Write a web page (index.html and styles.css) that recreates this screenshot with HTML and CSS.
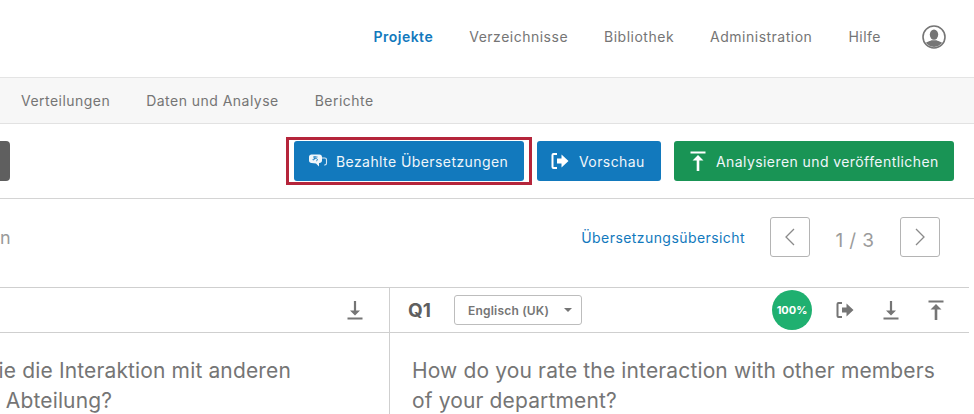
FILE: index.html
```html
<!DOCTYPE html>
<html lang="de">
<head>
<meta charset="utf-8">
<title>Übersetzungen</title>
<link rel="stylesheet" href="styles.css">
</head>
<body>
<header class="topnav">
  <a class="topnav-link is-active">Projekte</a>
  <a class="topnav-link">Verzeichnisse</a>
  <a class="topnav-link">Bibliothek</a>
  <a class="topnav-link">Administration</a>
  <a class="topnav-link">Hilfe</a>
  <svg class="avatar" viewBox="0 0 24 24" width="24" height="24">
    <defs><clipPath id="avatar-clip"><circle cx="12" cy="12" r="10"/></clipPath></defs>
    <g clip-path="url(#avatar-clip)" fill="#757575">
      <ellipse cx="12" cy="9.6" rx="4.2" ry="5.2"/>
      <path d="M2 24v-4.500c1-2.600 5.500-3 7.500-4.300h5c2 1.300 6.500 1.700 7.500 4.300V24z"/>
    </g>
    <circle cx="12" cy="12" r="11" fill="none" stroke="#757575" stroke-width="1.600"/>
  </svg>
</header>
<nav class="subnav">
  <a class="subnav-link">Verteilungen</a>
  <a class="subnav-link">Daten und Analyse</a>
  <a class="subnav-link">Berichte</a>
</nav>
<section class="toolbar">
  <span class="dark-stub"></span>
  <div class="toolbar-actions">
    <div class="highlight">
      <button class="btn btn-blue btn-wide">
        <svg class="btn-icon" viewBox="0 0 20 16" width="20" height="16">
          <path d="M13.500 5h3.300c1 0 1.700.7 1.700 1.700v3.600c0 1-.7 1.700-1.700 1.700h-.6" fill="none" stroke="#d9e8f4" stroke-width="1.100"/>
          <path d="M3.500 1.500h8c1.500 0 2.500 1 2.500 2.500v3.500c0 1.500-1 2.500-2.500 2.500h-.5v3.500L8 10.500 3.500 10c-1.500 0-2.500-1-2.500-2.500V4c0-1.500 1-2.500 2.500-2.500z" fill="#f0f6fa"/>
          <path d="M5 4h4.500M7 3c0 2-.7 3.500-1.500 4s-1-.6.500-1.200 3.500-.2 3.500.8-.8 1.200-1.300 1.200" fill="none" stroke="#1279bd" stroke-width=".9"/>
        </svg>
        <span>Bezahlte Übersetzungen</span>
      </button>
    </div>
    <button class="btn btn-blue btn-preview">
      <svg class="btn-icon" viewBox="0 0 18 18" width="18" height="18">
        <path d="M6 2H2.500c-.6 0-1 .4-1 1v12c0 .6.4 1 1 1H6" fill="none" stroke="#fff" stroke-width="2"/>
        <path d="M6 6.500h4.500V2.500L17.500 9l-7 6.500v-4H6z" fill="#fff"/>
      </svg>
      <span>Vorschau</span>
    </button>
    <button class="btn btn-green">
      <svg class="btn-icon" viewBox="0 0 16 20" width="16" height="20">
        <path d="M.500.500h15v2H.500zM8 4l5.500 5.500H9.300V20H6.700V9.500H2.500z" fill="#fff"/>
      </svg>
      <span>Analysieren und veröffentlichen</span>
    </button>
  </div>
</section>
<section class="pager-row">
  <span class="cut-title">n</span>
  <div class="pager">
    <a class="overview-link">Übersetzungsübersicht</a>
    <button class="page-btn">
      <svg viewBox="0 0 12 20" width="12" height="20"><path d="M10 2 2 10l8 8" fill="none" stroke="#8a8a8a" stroke-width="1.300"/></svg>
    </button>
    <span class="page-count">1 / 3</span>
    <button class="page-btn">
      <svg viewBox="0 0 12 20" width="12" height="20"><path d="m2 2 8 8-8 8" fill="none" stroke="#8a8a8a" stroke-width="1.300"/></svg>
    </button>
  </div>
</section>
<section class="columns">
  <div class="col col-left">
    <div class="col-head col-head-left">
      <svg class="tool" viewBox="0 0 16 20" width="16" height="20"><path d="M.5 17.500h15v2H.5zM6.900 1h2.200v9.500H13L8 15.500 3 10.500h3.900z" fill="#757575"/></svg>
    </div>
    <p class="col-text col-text-left"><span class="line">Wie bewerten Sie die Interaktion mit anderen</span><span class="line line-second">Mitgliedern Ihrer Abteilung?</span></p>
  </div>
  <div class="col col-right">
    <div class="col-head">
      <strong class="q-label">Q1</strong>
      <div class="lang-select"><span>Englisch (UK)</span><i class="caret"></i></div>
      <div class="tools">
        <span class="progress">100%</span>
        <svg class="tool" viewBox="0 0 18 18" width="18" height="18"><path d="M6 2H2.500c-.6 0-1 .4-1 1v12c0 .6.4 1 1 1H6" fill="none" stroke="#757575" stroke-width="2"/><path d="M6 6.500h4.500V2.500L17.500 9l-7 6.500v-4H6z" fill="#757575"/></svg>
        <svg class="tool" viewBox="0 0 16 20" width="16" height="20"><path d="M.5 17.500h15v2H.5zM6.900 1h2.200v9.500H13L8 15.500 3 10.500h3.900z" fill="#757575"/></svg>
        <svg class="tool" viewBox="0 0 16 20" width="16" height="20"><path d="M.5.500h15v2H.5zM8 4l5.500 5.500H9.300V20H6.700V9.500H2.500z" fill="#757575"/></svg>
      </div>
    </div>
    <p class="col-text">How do you rate the interaction with other members<br>of your department?</p>
  </div>
</section>
</body>
</html>
```
FILE: styles.css
```css
* { box-sizing: border-box; }
html, body { margin: 0; height: 414px; overflow: hidden; background: #fff; }
body { width: 974px; font-family: Inter, Roboto, sans-serif; color: #757575; }
button { font: inherit; letter-spacing: inherit; border: 0; padding: 0; cursor: pointer; }
a { cursor: pointer; }

.topnav { height: 78px; border-bottom: 1px solid #e4e4e4; display: flex; align-items: center; justify-content: flex-end; padding: 0 28px 4px 0; }
.topnav-link { font-size: 14px; letter-spacing: .5px; color: #757575; margin-right: 36px; }
.topnav-link:nth-child(5) { margin-right: 41px; }
.topnav-link.is-active { color: #1279bd; font-weight: 600; }
.avatar { display: block; }

.subnav { height: 46px; background: #f7f7f7; border-bottom: 1px solid #e2e2e2; display: flex; align-items: center; gap: 36px; padding: 0 0 1px 21px; }
.subnav-link { font-size: 14px; letter-spacing: .47px; color: #757575; }

.toolbar { height: 75px; border-bottom: 1px solid #d4d4d4; display: flex; align-items: center; justify-content: space-between; padding: 0 20px 0 0; }
.dark-stub { width: 10px; height: 40px; background: #5f5f5f; border-radius: 0 4px 4px 0; }
.toolbar-actions { display: flex; align-items: center; gap: 5px; }
.highlight { border: 3px solid #b5253b; padding: 1px 5px; height: 48px; display: flex; }
.btn { height: 40px; border-radius: 3px; color: #f0f6fa; font-size: 14px; letter-spacing: .42px; display: flex; align-items: center; }
.btn-blue { background: #1279bd; }
.btn-green { background: #199455; margin-left: 8px; }
.btn-wide { width: 230px; padding-left: 14px; gap: 8px; }
.btn-preview { width: 124px; padding-left: 14px; gap: 10px; }
.btn-green { width: 280px; padding-left: 16px; gap: 10px; }
.btn-icon { display: block; flex: none; }

.pager-row { height: 88px; display: flex; align-items: center; justify-content: space-between; padding: 0 34px 12px 0; }
.cut-title { font-size: 18px; color: #9a9a9a; }
.pager { display: flex; align-items: center; }
.overview-link { font-size: 14px; letter-spacing: .43px; color: #1279bd; margin-right: 25px; }
.page-btn { width: 40px; height: 40px; background: #fff; border: 1px solid #b4b4b4; border-radius: 3px; display: flex; align-items: center; justify-content: center; }
.page-count { width: 90px; text-align: center; font-size: 19px; letter-spacing: .4px; color: #9b9b9b; padding-top: 7px; }

.columns { display: flex; height: 128px; width: 969px; border-top: 1px solid #cfcfcf; }
.col { overflow: hidden; }
.col-left { width: 390px; flex: none; border-right: 1px solid #cfcfcf; }
.col-right { flex: 1; }
.col-head { height: 45px; border-bottom: 1px solid #cfcfcf; display: flex; align-items: center; }
.col-head-left { justify-content: flex-end; padding-right: 26px; }
.col-right .col-head { padding: 0 25px 0 18px; }
.q-label { font-size: 19px; font-weight: 700; color: #5f5f5f; width: 46px; }
.lang-select { width: 128px; height: 30px; border: 1px solid #bdbdbd; border-radius: 3px; display: flex; align-items: center; justify-content: space-between; padding: 0 9px 0 13px; font-size: 12px; letter-spacing: .2px; font-weight: 600; color: #757575; }
.caret { width: 0; height: 0; border: 4px solid transparent; border-top: 4px solid #757575; border-bottom: 0; }
.tools { margin-left: auto; display: flex; align-items: center; }
.progress { width: 40px; height: 40px; border-radius: 50%; background: #1fb070; color: #fff; font-size: 11px; font-weight: 700; display: flex; align-items: center; justify-content: center; margin-right: 24px; }
.tools .tool:nth-child(2) { margin-right: 29px; }
.tools .tool:nth-child(3) { margin-right: 29px; }
.tool { display: block; flex: none; }
.col-text { margin: 23px 0 0 22px; font-size: 21px; letter-spacing: .14px; line-height: 30px; color: #757575; white-space: nowrap; }
.col-text-left { margin-left: -160px; }
.line { display: block; }
.line-second { margin-left: -6px; }
```
